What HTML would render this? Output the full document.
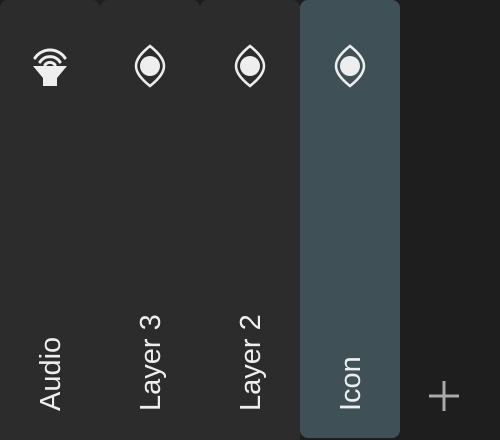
<!DOCTYPE html>
<html><head><style>
html,body{margin:0;padding:0;width:500px;height:440px;overflow:hidden}
body{background:#1e1e1e;position:relative;font-family:"Liberation Sans",sans-serif}
.col{position:absolute;top:0;width:100px;height:440px;background:#2c2c2c;border-radius:8px 8px 0 0}
.sel{background:#3f5157;height:438px;border-radius:8px}
.lbl{position:absolute;top:411px;transform-origin:0 0;transform:rotate(-90deg);color:#eee;font-size:29px;line-height:29px;white-space:nowrap}
svg{position:absolute}
</style></head><body>
<div class="col" style="left:0"></div>
<div class="col" style="left:100px"></div>
<div class="col" style="left:200px"></div>
<div class="col sel" style="left:300px"></div>

<svg style="left:30px;top:44px" width="40" height="44" viewBox="0 0 40 44">
<g fill="none" stroke="#eee" stroke-width="3" stroke-linecap="round">
<path d="M5 14 A18 18 0 0 1 35 14"/>
<path d="M10 18 A12 12 0 0 1 30 18"/>
<path d="M15 21 A6 6 0 0 1 25 21"/>
</g>
<path d="M3 22 H37 L27 34 V42 H13 V34 Z" fill="#eee"/>
</svg>

<svg style="left:133px;top:44px" width="34" height="44" viewBox="0 0 34 44">
<path d="M17 2 C7 10 3 16 3 22 C3 28 7 34 17 42 C27 34 31 28 31 22 C31 16 27 10 17 2 Z" fill="none" stroke="#eee" stroke-width="2.5"/>
<circle cx="17" cy="22" r="10" fill="#eee"/>
</svg>
<svg style="left:233px;top:44px" width="34" height="44" viewBox="0 0 34 44">
<path d="M17 2 C7 10 3 16 3 22 C3 28 7 34 17 42 C27 34 31 28 31 22 C31 16 27 10 17 2 Z" fill="none" stroke="#eee" stroke-width="2.5"/>
<circle cx="17" cy="22" r="10" fill="#eee"/>
</svg>
<svg style="left:333px;top:44px" width="34" height="44" viewBox="0 0 34 44">
<path d="M17 2 C7 10 3 16 3 22 C3 28 7 34 17 42 C27 34 31 28 31 22 C31 16 27 10 17 2 Z" fill="none" stroke="#eee" stroke-width="2.5"/>
<circle cx="17" cy="22" r="10" fill="#eee"/>
</svg>

<div class="lbl" style="left:37px">Audio</div>
<div class="lbl" style="left:137px">Layer 3</div>
<div class="lbl" style="left:237px">Layer 2</div>
<div class="lbl" style="left:337px">Icon</div>

<svg style="left:428px;top:380px" width="32" height="32" viewBox="0 0 32 32">
<path d="M16 1 V31 M1 16 H31" stroke="#aaa" stroke-width="3"/>
</svg>
</body></html>
